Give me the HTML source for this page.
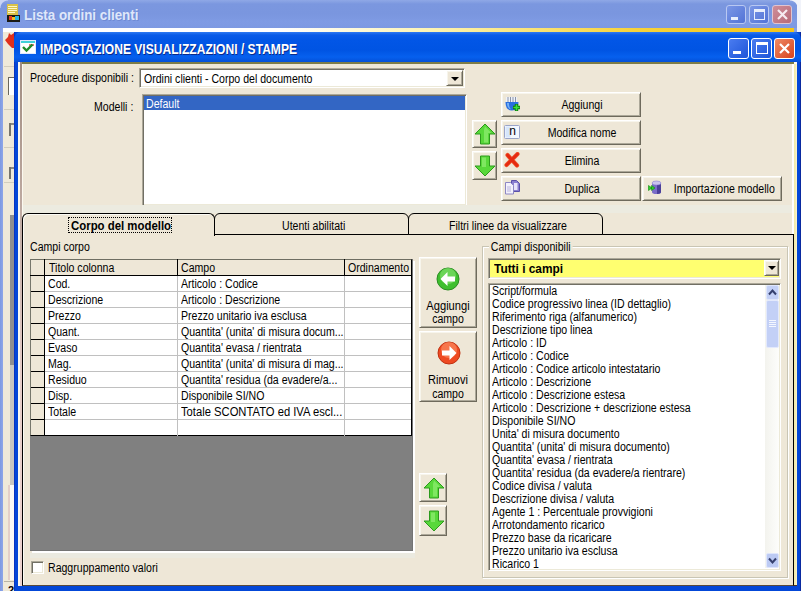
<!DOCTYPE html>
<html><head><meta charset="utf-8"><title>Impostazione visualizzazioni / stampe</title>
<style>
*{box-sizing:border-box;margin:0;padding:0}
html,body{width:801px;height:591px;overflow:hidden;background:#ECE9D8}
body{position:relative;font:12px "Liberation Sans",sans-serif;color:#000}
.a{position:absolute}
.t{position:absolute;white-space:nowrap;line-height:13px;height:13px;margin-top:1px;transform:scaleX(.88);transform-origin:0 0}
.face{background:#EEE7D7}
/* classic 3D raised button */
.btn{position:absolute;background:#EEE7D7;border:1px solid;border-color:#fff #6e6a5c #6e6a5c #fff;box-shadow:inset 1px 1px 0 #f7f5ec,inset -1px -1px 0 #aca899}
.btn .t{left:0;right:0;text-align:center;transform-origin:50% 0}
.sunk{position:absolute;background:#fff;border:1px solid;border-color:#aca899 #fff #fff #aca899;box-shadow:inset 1px 1px 0 #716f64,inset -1px -1px 0 #ece9d8}
.cap{position:absolute;width:21px;height:21px;border:1px solid #fff;border-radius:3px}
</style></head><body>

<!-- ===== background (inactive) window ===== -->
<div class="a" id="bgtitle" style="left:0;top:0;width:801px;height:28px;background:linear-gradient(#8fa8e6 0,#7b97df 4px,#7a96df 14px,#7f9be4 22px,#7d99e2 28px)"></div>
<div class="a" style="left:797px;top:0;width:4px;height:32px;background:#f1f3fa"></div>
<div class="a" style="left:790px;top:0;width:8px;height:8px;background:radial-gradient(circle at 0 8px,transparent 7px,#f1f3fa 8px)"></div>
<div class="a" style="left:0;top:0;width:8px;height:8px;background:radial-gradient(circle at 8px 8px,transparent 7px,#c9d4f3 8px)"></div>
<svg class="a" style="left:6px;top:4px" width="15" height="18" viewBox="0 0 15 18"><rect x="1" y="0" width="11" height="12" fill="#d9c24a"/><rect x="2" y="2" width="9" height="1" fill="#fff8c8"/><rect x="2" y="4" width="9" height="1" fill="#fff8c8"/><rect x="2" y="6" width="9" height="1" fill="#fff8c8"/><rect x="2" y="8" width="7" height="1" fill="#fff8c8"/><rect x="1" y="11" width="13" height="7" fill="#1a1a14"/><rect x="3" y="12" width="3" height="4" fill="#e23a22"/><rect x="6" y="13" width="3" height="3" fill="#f0c020"/><rect x="9" y="12" width="4" height="4" fill="#28b4e0"/></svg>
<div class="t" style="left:24px;top:6px;font:bold 14px 'Liberation Sans',sans-serif;letter-spacing:0;color:#dfe7fa;line-height:17px;height:17px;transform:scaleX(.955);transform-origin:0 0;text-shadow:1px 1px 0 #6f8ad4">Lista ordini clienti</div>
<div class="cap" style="left:726px;top:5px;width:20px;height:19px;background:linear-gradient(135deg,#7b97e6,#5273d6);border-color:#b9c8f2"><i class="a" style="left:4px;top:11px;width:7px;height:3px;background:#e8eefc"></i></div>
<div class="cap" style="left:749px;top:5px;width:20px;height:19px;background:linear-gradient(135deg,#7b97e6,#5273d6);border-color:#b9c8f2"><i class="a" style="left:4px;top:3px;width:11px;height:11px;border:1px solid #e8eefc;border-top-width:3px"></i></div>
<div class="cap" style="left:772px;top:5px;width:20px;height:19px;background:linear-gradient(135deg,#cf8d98,#b76a78);border-color:#e0c4d0"><svg class="a" style="left:3px;top:2px" width="13" height="13" viewBox="0 0 13 13"><path d="M2 2 L11 11 M11 2 L2 11" stroke="#f6eaf0" stroke-width="2.2"/></svg></div>
<div class="a" style="left:0;top:28px;width:797px;height:4px;background:#86a0e6"></div>
<div class="a" style="left:0;top:28px;width:794px;height:4px;background:linear-gradient(90deg,#fff 0,#fff 35%,#fdf3b0 55%,#f7d23a 80%,#f5c51a 100%)"></div>
<div class="a" style="left:0;top:28px;width:3px;height:563px;background:linear-gradient(90deg,#7d99e2,#8ea6e8)"></div>
<div class="a" style="left:3px;top:32px;width:11px;height:559px;background:#efe9d9"></div>
<div class="a" style="left:4px;top:66px;width:10px;height:1px;background:#d2cdbd"></div>
<div class="a" style="left:4px;top:109px;width:10px;height:1px;background:#d2cdbd"></div>
<div class="a" style="left:4px;top:147px;width:10px;height:1px;background:#d2cdbd"></div>
<div class="a" style="left:4px;top:182px;width:10px;height:1px;background:#d2cdbd"></div>
<div class="a" style="left:8px;top:77px;width:6px;height:18px;background:#fff;border-left:1px solid #6a675c;border-top:1px solid #6a675c"></div>
<div class="a" style="left:9px;top:123px;width:2px;height:13px;background:#77756c"></div><div class="a" style="left:11px;top:123px;width:3px;height:2px;background:#8d8a80"></div>
<div class="a" style="left:9px;top:167px;width:2px;height:12px;background:#77756c"></div><div class="a" style="left:11px;top:167px;width:3px;height:2px;background:#8d8a80"></div>
<div class="a" style="left:10px;top:215px;width:4px;height:150px;background:#8f8f8f"></div>
<div class="a" style="left:10px;top:365px;width:4px;height:120px;background:#c9c7c0"></div>
<div class="a" style="left:8px;top:485px;width:2px;height:95px;background:#e3cfc8"></div>
<div class="a" style="left:10px;top:485px;width:4px;height:95px;background:#fbfaf6"></div>
<div class="a" style="left:4px;top:581px;width:10px;height:1px;background:#b9b4a4"></div>
<div class="a" style="left:8px;top:585px;width:6px;height:6px;font:bold 11px 'Liberation Sans',sans-serif;line-height:11px;overflow:hidden">2</div>

<!-- ===== dialog ===== -->
<div class="a" id="dlg" style="left:14px;top:32px;width:787px;height:559px;background:#0347d8;box-shadow:inset -1px 0 0 #0a2aa0,inset 1px 0 0 #0a35c0"></div>
<div class="a" id="dlgtitle" style="left:14px;top:32px;width:787px;height:30px;border-radius:7px 7px 0 0;background:linear-gradient(#2f7af2 0,#0a5be8 3px,#0256e6 8px,#0054e3 18px,#0660ee 25px,#0450d8 30px)"></div>
<div class="t" style="left:40px;top:40px;font:bold 14px 'Liberation Sans',sans-serif;letter-spacing:0;color:#fff;line-height:17px;height:17px;transform:scaleX(.862);transform-origin:0 0;text-shadow:1px 1px 0 #0a2a8a">IMPOSTAZIONE VISUALIZZAZIONI / STAMPE</div>
<div class="cap" style="left:728px;top:38px;background:linear-gradient(135deg,#4a7cf0,#1e55d8)"><i class="a" style="left:4px;top:12px;width:8px;height:3px;background:#fff"></i></div>
<div class="cap" style="left:751px;top:38px;background:linear-gradient(135deg,#4a7cf0,#1e55d8)"><i class="a" style="left:4px;top:3px;width:12px;height:12px;border:1px solid #fff;border-top-width:3px"></i></div>
<div class="cap" style="left:774px;top:38px;background:linear-gradient(135deg,#ee8a66,#d8421c)"><svg class="a" style="left:3px;top:3px" width="13" height="13" viewBox="0 0 13 13"><path d="M2 2 L11 11 M11 2 L2 11" stroke="#fff" stroke-width="2.2"/></svg></div>
<svg class="a" style="left:20px;top:39px" width="16" height="16" viewBox="0 0 16 16"><rect x="0.5" y="1.5" width="15" height="13" fill="#fff" stroke="#dfe8ff"/><rect x="1" y="2" width="14" height="2" fill="#3fd0d8"/><rect x="9" y="5" width="5" height="2" fill="#e87a7a"/><path d="M3 8 L6.5 11.5 L12.5 5.5" fill="none" stroke="#1f8a2a" stroke-width="2.4"/></svg>
<svg class="a" style="left:4px;top:32px" width="10" height="18" viewBox="0 0 10 18"><path d="M10 1 L7 3 L5 1 L4 5 L1 8 L4 12 L8 16 L10 16 Z" fill="#e0301c"/></svg>
<!-- client -->
<div class="a" id="client" style="left:18px;top:62px;width:779px;height:524px;background:#fbf9f0"></div>
<div class="a" style="left:20px;top:62px;width:2px;height:524px;background:linear-gradient(#a08c80,#c0aca4 30%,#e6cdc8 60%,#ecd2cf)"></div>
<div class="a" style="left:22px;top:62px;width:772px;height:2px;background:#7d7c48"></div>
<div class="a face" style="left:23px;top:64px;width:771px;height:521px"></div>
<div class="a" style="left:792px;top:64px;width:5px;height:522px;background:linear-gradient(90deg,#fff 0,#fff 2px,#f2eaa8 2px,#f4eeb8 4px,#fbf8e0 5px)"></div>
<div class="a" style="left:22px;top:585px;width:775px;height:1px;background:#4a3020"></div>

<!-- ===== top section ===== -->
<div class="t" style="left:30px;top:71px">Procedure disponibili :</div>
<div class="t" style="left:94px;top:100px">Modelli :</div>
<div class="sunk" style="left:139px;top:68px;width:326px;height:20px"></div>
<div class="t" style="left:144px;top:72px">Ordini clienti - Corpo del documento</div>
<div class="btn" style="left:446px;top:70px;width:17px;height:16px"></div>
<div class="a" style="left:451px;top:77px;width:0;height:0;border:4px solid transparent;border-top-color:#000;border-bottom:0"></div>
<div class="sunk" style="left:142px;top:94px;width:325px;height:112px"></div>
<div class="a" style="left:144px;top:96px;width:321px;height:14px;background:#3366c4"></div>
<div class="t" style="left:146px;top:97px;color:#fff">Default</div>

<div class="btn" style="left:472px;top:120px;width:25px;height:28px"></div>
<div class="btn" style="left:472px;top:151px;width:25px;height:29px"></div>
<svg class="a" style="left:474px;top:123px" width="22" height="22" viewBox="0 0 22 22"><path d="M11 1 L21 11 L15.5 11 L15.5 21 L6.5 21 L6.5 11 L1 11 Z" fill="#58d83a" stroke="#2c9a1c" stroke-width="1"/><path d="M11 3.5 L17.5 10 L14 10 L14 19.5 L10 19.5 L10 7 Z" fill="#9af27c" opacity=".6"/></svg>
<svg class="a" style="left:474px;top:155px" width="22" height="22" viewBox="0 0 22 22"><path d="M11 21 L21 11 L15.5 11 L15.5 1 L6.5 1 L6.5 11 L1 11 Z" fill="#58d83a" stroke="#2c9a1c" stroke-width="1"/><path d="M8 2.5 L12 2.5 L12 12 L8 12 Z" fill="#9af27c" opacity=".6"/></svg>

<div class="btn" style="left:501px;top:92px;width:140px;height:25px"><div class="t" style="top:5px;left:22px">Aggiungi</div></div>
<div class="btn" style="left:501px;top:120px;width:140px;height:25px"><div class="t" style="top:5px;left:22px">Modifica nome</div></div>
<div class="btn" style="left:501px;top:148px;width:140px;height:25px"><div class="t" style="top:5px;left:22px">Elimina</div></div>
<div class="btn" style="left:501px;top:176px;width:140px;height:25px"><div class="t" style="top:5px;left:22px">Duplica</div></div>
<div class="btn" style="left:642px;top:176px;width:140px;height:25px"><div class="t" style="top:5px;left:24px">Importazione modello</div></div>

<!-- button icons -->
<svg class="a" style="left:504px;top:96px" width="16" height="16" viewBox="0 0 16 16"><path d="M2 1 h11 v6 h-11z" fill="#eef2fa"/><path d="M4 1v5M6.5 1v5M9 1v5M11.5 1v5" stroke="#8a93a8" stroke-width="1"/><path d="M1.5 6 Q1.5 14.5 8 14.5 Q14.5 14.5 14.5 6 Z" fill="#2a6fe0"/><path d="M3 7 Q3 12 7 13.5 Q4.5 11 5 7 Z" fill="#79b4f5"/><path d="M9 11.5h7M12.500 8v7" stroke="#0a7a0a" stroke-width="3.4"/><path d="M9.500 11.5h6M12.500 8.500v6" stroke="#3fe03f" stroke-width="1.6"/></svg>
<svg class="a" style="left:504px;top:124px" width="16" height="16" viewBox="0 0 16 16"><rect x="0.500" y="1.500" width="15" height="13" rx="1" fill="#f4f8ff" stroke="#9aa4c8"/><rect x="1.500" y="2.500" width="5" height="11" fill="#d6e6fb"/></svg>
<div class="a" style="left:508px;top:124px;width:9px;height:14px;font:bold 12px 'Liberation Sans',sans-serif;line-height:14px;text-align:center;font-weight:normal">n</div>
<svg class="a" style="left:504px;top:152px" width="16" height="16" viewBox="0 0 16 16"><path d="M3.500 3 Q7 7 13 13.500 M13.500 2 Q9 6.500 2.500 13" fill="none" stroke="#ee5a30" stroke-width="4.200" stroke-linecap="round"/><path d="M3.500 3 Q7 7 13 13.500 M13.500 2 Q9 6.500 2.500 13" fill="none" stroke="#e62a10" stroke-width="2.800" stroke-linecap="round"/></svg>
<svg class="a" style="left:504px;top:179px" width="16" height="16" viewBox="0 0 16 16"><path d="M7.500 1.500h5l3 3v8h-8z" fill="#8a7fd0" stroke="#5a4fa8"/><path d="M10 4h3.500v7H10z" fill="#e8e4fa"/><path d="M1.500 3.500h5l3 3v8.500h-8z" fill="#f3f1fc" stroke="#8c86c4"/><path d="M3 8h4M3 10h4M3 12h4" stroke="#b9b4de" stroke-width="1"/></svg>
<svg class="a" style="left:648px;top:180px" width="16" height="16" viewBox="0 0 16 16"><path d="M4 3v9a4.500 2 0 0 0 9 0V3z" fill="#7a6cc8"/><path d="M9 3v11a4.500 2 0 0 0 4-2V3z" fill="#4a3f9a"/><ellipse cx="8.500" cy="3" rx="4.500" ry="2" fill="#c9c2f0" stroke="#8a80d0" stroke-width=".6"/><path d="M0.500 5.500 L4 8 L0.500 10.500Z M3.500 5.500 L7 8 L3.500 10.500Z" fill="#2fd02f" stroke="#0a8a0a" stroke-width=".6"/></svg>

<!-- ===== tabs ===== -->
<div class="a" style="left:23px;top:205px;width:769px;height:8px;background:#ecebe0"></div>
<div class="a" id="panel" style="left:22px;top:234px;width:772px;height:352px;background:#EEE7D7;border:1px solid #000;border-bottom-color:#5a4a3a;box-shadow:inset 1px 0 0 #fbfaf4"></div>
<div class="a" style="left:214px;top:213px;width:195px;height:22px;background:#EEE7D7;border:1px solid #000;border-radius:6px 6px 0 0"></div>
<div class="a" style="left:408px;top:213px;width:195px;height:22px;background:#EEE7D7;border:1px solid #000;border-radius:6px 6px 0 0"></div>
<div class="a" style="left:22px;top:213px;width:193px;height:23px;background:#EEE7D7;border:1px solid #000;border-bottom:0;border-radius:6px 6px 0 0;box-shadow:inset 1px 1px 0 #fbfaf4"></div>
<div class="t" id="tab1" style="left:71px;top:218px;font:bold 12px 'Liberation Sans',sans-serif;line-height:14px;height:14px;transform:scaleX(.95)">Corpo del modello</div>
<div class="a" style="left:68px;top:217px;width:104px;height:16px;border:1px dotted #000"></div>
<div class="t" style="left:282px;top:219px">Utenti abilitati</div>
<div class="t" style="left:449px;top:219px">Filtri linee da visualizzare</div>

<div class="t" style="left:30px;top:240px">Campi corpo</div>
<!-- grid -->
<div class="a" id="grid" style="left:30px;top:259px;width:383px;height:292px;background:#808080;box-shadow:2px 2px 0 #fff,inset -1px -1px 0 #747474"></div>
<div class="a" style="left:30px;top:553px;width:385px;height:5px;background:#ebeae0"></div>
<div class="a" style="left:30px;top:259px;width:382px;height:177px;background:#fff;border:1px solid #000;border-top-color:#6e6e62;border-left-color:#77776c"></div>
<div class="a" style="left:31px;top:260px;width:380px;height:15px;background:#EEE7D7"></div>
<div class="a" style="left:31px;top:260px;width:13px;height:175px;background:#EEE7D7"></div>
<div class="a" style="left:30px;top:275px;width:382px;height:1px;background:#000"></div>
<div class="a" style="left:44px;top:259px;width:1px;height:177px;background:#000"></div>
<div class="a" style="left:177px;top:259px;width:1px;height:17px;background:#000"></div>
<div class="a" style="left:344px;top:259px;width:1px;height:17px;background:#000"></div>
<div class="a" style="left:177px;top:276px;width:1px;height:160px;background:#c0c0c0"></div>
<div class="a" style="left:344px;top:276px;width:1px;height:160px;background:#c0c0c0"></div>
<div class="t" style="left:49px;top:261px">Titolo colonna</div>
<div class="t" style="left:181px;top:261px">Campo</div>
<div class="t" style="left:348px;top:261px">Ordinamento</div>
<div class="t" style="left:48px;top:277px">Cod.</div><div class="t" style="left:181px;top:277px">Articolo : Codice</div>
<div class="t" style="left:48px;top:293px">Descrizione</div><div class="t" style="left:181px;top:293px">Articolo : Descrizione</div>
<div class="t" style="left:48px;top:309px">Prezzo</div><div class="t" style="left:181px;top:309px">Prezzo unitario iva esclusa</div>
<div class="t" style="left:48px;top:325px">Quant.</div><div class="t" style="left:181px;top:325px">Quantita' (unita' di misura docum...</div>
<div class="t" style="left:48px;top:341px">Evaso</div><div class="t" style="left:181px;top:341px">Quantita' evasa / rientrata</div>
<div class="t" style="left:48px;top:357px">Mag.</div><div class="t" style="left:181px;top:357px">Quantita' (unita' di misura di mag...</div>
<div class="t" style="left:48px;top:373px">Residuo</div><div class="t" style="left:181px;top:373px">Quantita' residua (da evadere/a...</div>
<div class="t" style="left:48px;top:389px">Disp.</div><div class="t" style="left:181px;top:389px">Disponibile SI/NO</div>
<div class="t" style="left:48px;top:405px">Totale</div><div class="t" style="left:181px;top:405px;transform:scaleX(.935)">Totale SCONTATO ed IVA escl...</div>
<div class="a" style="left:45px;top:291px;width:366px;height:1px;background:#c0c0c0"></div><div class="a" style="left:31px;top:291px;width:13px;height:1px;background:#000"></div>
<div class="a" style="left:45px;top:307px;width:366px;height:1px;background:#c0c0c0"></div><div class="a" style="left:31px;top:307px;width:13px;height:1px;background:#000"></div>
<div class="a" style="left:45px;top:323px;width:366px;height:1px;background:#c0c0c0"></div><div class="a" style="left:31px;top:323px;width:13px;height:1px;background:#000"></div>
<div class="a" style="left:45px;top:339px;width:366px;height:1px;background:#c0c0c0"></div><div class="a" style="left:31px;top:339px;width:13px;height:1px;background:#000"></div>
<div class="a" style="left:45px;top:355px;width:366px;height:1px;background:#c0c0c0"></div><div class="a" style="left:31px;top:355px;width:13px;height:1px;background:#000"></div>
<div class="a" style="left:45px;top:371px;width:366px;height:1px;background:#c0c0c0"></div><div class="a" style="left:31px;top:371px;width:13px;height:1px;background:#000"></div>
<div class="a" style="left:45px;top:387px;width:366px;height:1px;background:#c0c0c0"></div><div class="a" style="left:31px;top:387px;width:13px;height:1px;background:#000"></div>
<div class="a" style="left:45px;top:403px;width:366px;height:1px;background:#c0c0c0"></div><div class="a" style="left:31px;top:403px;width:13px;height:1px;background:#000"></div>
<div class="a" style="left:45px;top:419px;width:366px;height:1px;background:#c0c0c0"></div><div class="a" style="left:31px;top:419px;width:13px;height:1px;background:#000"></div>

<!-- checkbox -->
<div class="sunk" style="left:31px;top:561px;width:13px;height:13px"></div>
<div class="t" style="left:48px;top:561px">Raggruppamento valori</div>

<!-- middle buttons -->
<div class="btn" style="left:419px;top:257px;width:58px;height:71px"><div class="t" style="top:41px;transform:scaleX(.93)">Aggiungi</div><div class="t" style="top:54px">campo</div></div>
<div class="btn" style="left:419px;top:331px;width:58px;height:71px"><div class="t" style="top:41px;transform:scaleX(.92)">Rimuovi</div><div class="t" style="top:55px">campo</div></div>
<svg class="a" style="left:436px;top:267px" width="24" height="24" viewBox="0 0 24 24"><circle cx="12" cy="12" r="11" fill="#3fbf2f" stroke="#2a8c22"/><circle cx="12" cy="9" r="8" fill="#8fe87a" opacity=".55"/><path d="M4.5 12 L11.5 5 L11.5 9.5 L19 9.5 L19 14.5 L11.5 14.5 L11.5 19 Z" fill="#fff"/></svg>
<svg class="a" style="left:437px;top:341px" width="24" height="24" viewBox="0 0 24 24"><circle cx="12" cy="12" r="11" fill="#ee4a22" stroke="#c03010"/><circle cx="12" cy="9" r="8" fill="#ff9a70" opacity=".55"/><path d="M19.5 12 L12.5 5 L12.5 9.5 L5 9.5 L5 14.5 L12.5 14.5 L12.5 19 Z" fill="#fff"/></svg>
<div class="btn" style="left:419px;top:473px;width:28px;height:29px"></div>
<div class="btn" style="left:419px;top:505px;width:28px;height:31px"></div>
<svg class="a" style="left:423px;top:477px" width="22" height="22" viewBox="0 0 22 22"><path d="M11 1 L21 11 L15.5 11 L15.5 21 L6.5 21 L6.5 11 L1 11 Z" fill="#58d83a" stroke="#2c9a1c" stroke-width="1"/><path d="M11 3.5 L17.5 10 L14 10 L14 19.5 L10 19.5 L10 7 Z" fill="#9af27c" opacity=".6"/></svg>
<svg class="a" style="left:423px;top:510px" width="22" height="22" viewBox="0 0 22 22"><path d="M11 21 L21 11 L15.5 11 L15.5 1 L6.5 1 L6.5 11 L1 11 Z" fill="#58d83a" stroke="#2c9a1c" stroke-width="1"/><path d="M8 2.5 L12 2.5 L12 12 L8 12 Z" fill="#9af27c" opacity=".6"/></svg>

<!-- right group -->
<div class="a" style="left:482px;top:246px;width:306px;height:332px;border:1px solid #c9c5b4;box-shadow:1px 1px 0 #fff,inset 1px 1px 0 #fff"></div>
<div class="t face" style="left:489px;top:240px;padding:0 2px">Campi disponibili</div>
<div class="sunk" style="left:488px;top:258px;width:293px;height:21px;background:#ffff70"></div>
<div class="t" id="tutti" style="left:494px;top:261px;font:bold 12px 'Liberation Sans',sans-serif;line-height:14px;height:14px;transform:scaleX(.99)">Tutti i campi</div>
<div class="btn" style="left:764px;top:260px;width:15px;height:16px"></div>
<div class="a" style="left:768px;top:266px;width:0;height:0;border:4px solid transparent;border-top-color:#000;border-bottom:0"></div>
<div class="sunk" style="left:488px;top:283px;width:293px;height:288px"></div>
<div class="a" style="left:765px;top:285px;width:14px;height:283px;background:linear-gradient(90deg,#f3f3ee,#fdfdfb)"></div>
<div class="a" style="left:766px;top:285px;width:13px;height:15px;background:#c3d0f6;border-radius:2px;border:1px solid #dfe6fb"></div>
<svg class="a" style="left:768px;top:288px" width="9" height="8" viewBox="0 0 9 8"><path d="M1 6.500 L4.500 2.500 L8 6.500" fill="none" stroke="#35406e" stroke-width="2"/></svg>
<div class="a" style="left:766px;top:300px;width:13px;height:48px;background:#c3d0f6;border-radius:2px;border:1px solid #e3e9fc"></div>
<div class="a" style="left:769px;top:320px;width:7px;height:1px;background:#f4f7ff;box-shadow:0 2px 0 #f4f7ff,0 4px 0 #f4f7ff,0 6px 0 #f4f7ff"></div>
<div class="a" style="left:766px;top:553px;width:13px;height:15px;background:#bccaf3;border-radius:2px;border:1px solid #dfe6fb"></div>
<svg class="a" style="left:768px;top:557px" width="9" height="8" viewBox="0 0 9 8"><path d="M1 1.500 L4.500 5.500 L8 1.500" fill="none" stroke="#35406e" stroke-width="2"/></svg>
<div class="t" style="left:492px;top:284px">Script/formula</div>
<div class="t" style="left:492px;top:297px">Codice progressivo linea (ID dettaglio)</div>
<div class="t" style="left:492px;top:310px">Riferimento riga (alfanumerico)</div>
<div class="t" style="left:492px;top:323px">Descrizione tipo linea</div>
<div class="t" style="left:492px;top:336px">Articolo : ID</div>
<div class="t" style="left:492px;top:349px">Articolo : Codice</div>
<div class="t" style="left:492px;top:362px">Articolo : Codice articolo intestatario</div>
<div class="t" style="left:492px;top:375px">Articolo : Descrizione</div>
<div class="t" style="left:492px;top:388px">Articolo : Descrizione estesa</div>
<div class="t" style="left:492px;top:401px">Articolo : Descrizione + descrizione estesa</div>
<div class="t" style="left:492px;top:414px">Disponibile SI/NO</div>
<div class="t" style="left:492px;top:427px">Unita' di misura documento</div>
<div class="t" style="left:492px;top:440px">Quantita' (unita' di misura documento)</div>
<div class="t" style="left:492px;top:453px">Quantita' evasa / rientrata</div>
<div class="t" style="left:492px;top:466px">Quantita' residua (da evadere/a rientrare)</div>
<div class="t" style="left:492px;top:479px">Codice divisa / valuta</div>
<div class="t" style="left:492px;top:492px">Descrizione divisa / valuta</div>
<div class="t" style="left:492px;top:505px">Agente 1 : Percentuale provvigioni</div>
<div class="t" style="left:492px;top:518px">Arrotondamento ricarico</div>
<div class="t" style="left:492px;top:531px">Prezzo base da ricaricare</div>
<div class="t" style="left:492px;top:544px">Prezzo unitario iva esclusa</div>
<div class="t" style="left:492px;top:557px">Ricarico 1</div>

</body></html>
